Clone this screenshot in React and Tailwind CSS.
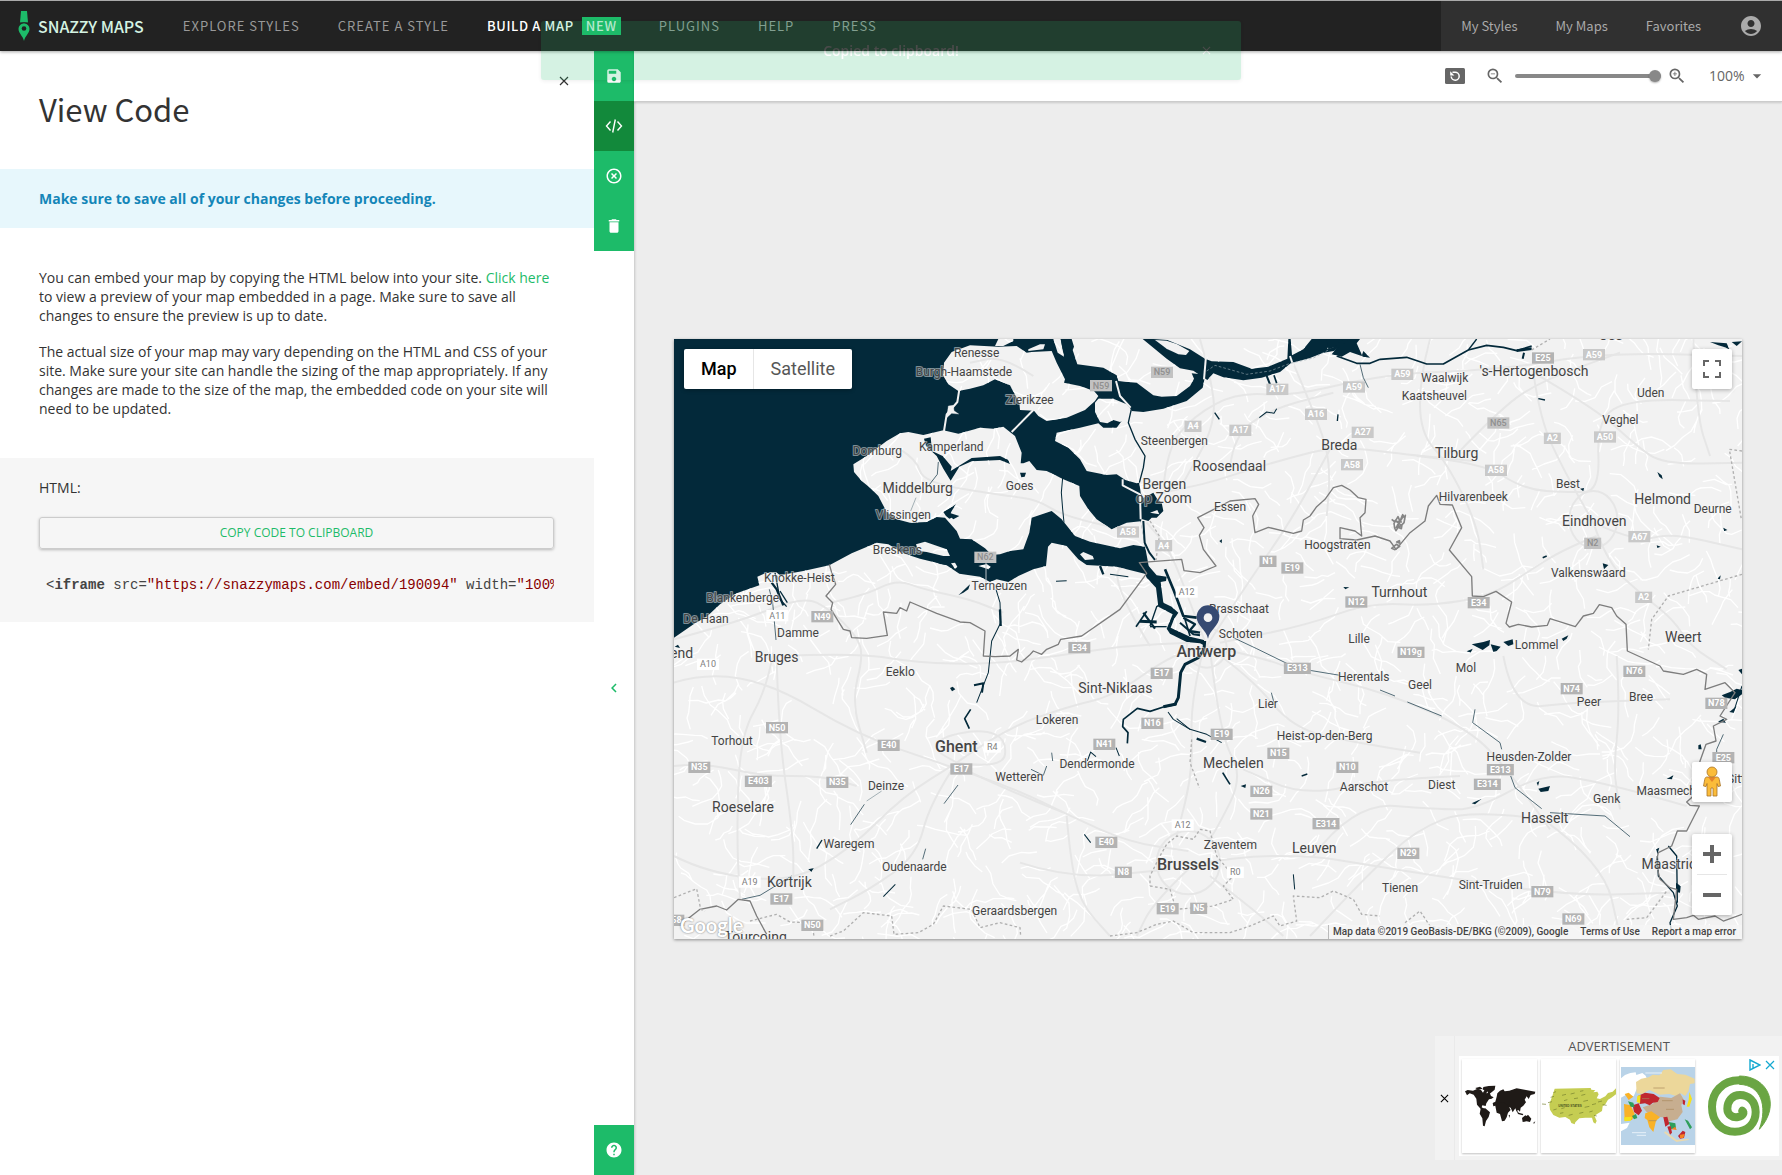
import React from "react";
import {
  MdSave,
  MdHighlightOff,
  MdDelete,
  MdHelp,
  MdAccountCircle,
  MdZoomIn,
  MdZoomOut,
  MdArrowDropDown,
  MdChevronLeft,
} from "react-icons/md";

/* ---------- map data (drawn at three units per pixel) ---------- */

const SEA = [
  // North Sea, Oosterschelde and Westerschelde
  "12,9 1150,9 1163,50 1182,62 1172,9 1205,9 1212,32 1208,42 1222,85 1300,95 1340,118 1345,135 1400,140 1450,178 1475,182 1520,180 1560,150 1572,128 1565,112 1606,116 1598,155 1550,195 1480,218 1420,228 1385,225 1355,255 1340,275 1300,275 1285,262 1230,275 1160,290 1155,315 1195,335 1230,370 1250,405 1310,417 1340,415 1366,432 1400,442 1408,440 1412,470 1425,500 1412,560 1425,630 1436,690 1430,715 1340,692 1250,687 1225,670 1190,630 1145,620 1134,632 1128,690 1090,700 1045,720 1015,738 980,730 960,738 930,722 868,713 830,688 750,668 700,652 655,625 620,620 545,652 478,688 400,705 330,718 318,708 285,712 262,722 268,748 200,772 150,805 110,842 75,862 12,905",
  // Haringvliet and Hollands Diep
  "1418,9 1450,9 1492,12 1560,40 1605,68 1625,76 1690,78 1745,98 1795,92 1852,68 1855,9 1862,9 1866,58 1900,40 1925,9 1990,9 1965,48 1920,66 1862,82 1830,108 1775,125 1720,133 1660,124 1630,112 1612,132 1590,118 1570,104 1530,97 1490,68 1450,35",
  "1970,9 2070,9 2060,22 2078,62 2100,65 2080,45 2075,60 2040,48 2015,62 1985,55 2005,30 1975,40",
  "1408,492 1450,470 1462,490 1475,500 1480,525 1460,545 1445,545 1435,555 1412,548",
  // river towards Antwerp
  "1408,676 1436,690 1460,718 1490,722 1488,735 1472,738 1480,800 1505,812 1525,830 1512,850 1502,875 1560,902 1602,912 1606,930 1590,922 1550,918 1500,893 1490,878 1508,835 1465,812 1458,755 1430,725",
];

const ISLANDS = [
  "820,120 822,80 845,48 900,28 985,32 1040,30 1070,50 1085,48 1145,45 1160,80 1185,130 1182,140 1230,150 1272,165 1285,180 1275,195 1245,222 1190,245 1130,255 1105,240 1092,224 1050,222 1048,200 1020,148 975,130 940,148 900,158 865,165 835,145",
  "550,385 590,360 650,315 690,292 715,288 760,297 820,283 865,293 930,275 970,278 1000,272 1035,300 1055,350 1052,382 1060,382 1078,375 1100,402 1130,405 1180,430 1228,450 1230,480 1255,520 1280,550 1325,580 1370,560 1412,556 1425,632 1390,627 1350,637 1260,617 1215,600 1175,550 1145,525 1085,545 1078,590 1060,640 1020,645 990,655 965,657 945,637 905,610 870,608 860,585 825,545 800,543 770,558 720,560 680,550 650,528 625,480 600,455 575,435 552,408",
  "1275,200 1285,188 1330,188 1370,205 1385,222 1382,245 1350,258 1330,252 1312,262 1290,258 1275,228",
  "1455,12 1490,38 1525,55 1548,57 1558,45 1520,24 1490,14",
  "738,625 765,617 830,640 840,660 820,660 770,648 745,645",
  "843,682 855,680 862,692 855,698",
  "1230,655 1240,648 1268,660 1272,670 1245,672",
  "985,9 975,30 1000,30 1030,15 1030,9",
  "925,690 950,684 962,692 955,700",
  "1075,40 1110,25 1125,25 1120,40 1075,45",
  "1440,530 1462,522 1468,535",
];

const INNER_WATER = [
  "762,308 782,304 786,345 818,360 845,392 842,405 905,366 990,360 1015,372 1020,384 990,372 940,374 905,376 868,392 842,434 820,398 800,360 768,330",
  "820,528 858,505 845,525 842,532 868,540 850,550 845,545 838,548 828,540",
  "750,655 800,662 850,690 810,684",
  "1050,410 1068,410 1064,422 1054,424",
  "865,778 900,745 895,760 880,770",
  "1172,9 1182,9 1190,42 1178,40",
  // lakes and ponds
  "2405,925 2440,918 2460,912 2458,928 2438,942 2425,935",
  "2500,918 2528,910 2530,925 2515,930",
  "2675,908 2695,898 2690,908 2680,915",
  "2798,682 2815,687 2802,700",
  "2962,408 2975,418 2978,430 2968,422",
  "2960,628 2972,632 2962,636",
  "3160,575 3172,582 3162,586",
  "3142,728 3152,718 3150,730",
  "2730,458 2742,456 2740,466",
  "3120,18 3170,22 3178,40 3160,32 3145,28",
  "3185,18 3216,16 3200,30",
  "2390,946 2408,938 2402,950",
  "2462,925 2492,932 2480,945 2470,948",
  "2605,1358 2640,1350 2635,1365 2612,1368",
  "2600,1340 2608,1335 2604,1350",
  "2405,1402 2435,1388 2415,1405",
  "2990,1328 3010,1318 3006,1330",
  "3155,1078 3180,1068 3200,1058 3216,1062 3216,1075 3195,1090 3165,1085",
  "3178,1128 3200,1110 3190,1130",
  "3142,1158 3160,1148 3168,1160",
  "3085,1228 3092,1225 3095,1240 3085,1240",
  "2958,1540 2968,1535 2962,1555",
  "3018,1640 3032,1650 3030,1670 3018,1668",
  "3205,1002 3216,998 3216,1015",
  "1712,1350 1728,1345 1726,1356",
  "2020,753 2038,754 2026,760",
  "1648,615 1656,610 1655,622",
  "14,932 24,926 30,936",
  "840,1056 848,1052 856,1060 846,1066",
  "415,1600 432,1596 424,1608",
];

// [points, width]
const STREAMS = [
  ["1385,215 1375,260 1395,310 1425,360 1420,395 1408,440", 4],
  ["1178,425 1174,470 1178,520 1182,560", 3],
  ["1420,555 1424,620 1438,650 1455,672", 6],
  ["1485,700 1512,765 1540,840 1580,845", 8],
  ["1540,845 1575,865 1558,885 1590,890", 7],
  ["1410,856 1460,858", 9],
  ["1420,830 1455,878", 7],
  ["1398,872 1430,826", 5],
  ["1440,870 1460,812 1480,800", 4],
  ["1440,872 1490,872", 4],
  ["1530,860 1570,895 1590,898", 6],
  ["1545,850 1560,900", 5],
  ["1604,915 1602,940 1585,965 1545,985 1532,1010 1525,1085 1515,1105 1480,1112", 9],
  ["1520,1105 1480,1113 1440,1126 1402,1117 1360,1150 1358,1172 1374,1190 1372,1222", 5],
  ["978,760 990,800 992,860 965,915 955,1010 920,1100", 3],
  ["990,820 992,870", 7],
  ["912,1048 940,1042 936,1070", 6],
  ["902,1120 884,1148 898,1178", 5],
  ["805,378 802,415 775,450", 2],
  ["738,485 722,525", 1],
  ["1290,690 1300,715", 7],
  ["1320,715 1375,722", 3],
  ["1158,736 1190,734", 3],
  ["2130,70 2210,64 2270,84 2320,84 2395,42 2450,28 2500,34 2540,44 2585,30", 5],
  ["2395,42 2420,9", 4],
  ["2540,44 2585,38", 8],
  ["2562,50 2558,68", 6],
  ["2000,60 2060,82 2100,82 2130,70", 5],
  ["2070,85 2080,125 2095,155", 2],
  ["1935,50 1990,40 2030,9", 10],
  ["1790,120 1800,145", 6],
  ["1812,118 1820,142", 5],
  ["1768,245 1790,228 1812,232 1820,218", 3],
  ["1634,230 1648,250", 4],
  ["2004,235 2002,255", 4],
  ["2605,188 2625,192", 4],
  ["2618,665 2630,660", 5],
  ["315,710 330,790 350,812", 4],
  ["298,760 308,800 318,912", 2],
  ["305,740 320,760 340,808", 7],
  ["330,765 352,800", 4],
  ["1494,1128 1510,1150 1560,1180", 3],
  ["1520,1148 1560,1180 1610,1195 1655,1220", 3],
  ["1580,1208 1608,1218", 7],
  ["1658,1310 1680,1345", 5],
  ["1690,905 1760,938 1850,982 1925,1004 2010,1018", 2],
  ["2130,1062 2175,1080", 2],
  ["2212,1098 2315,1140", 2],
  ["2415,1120 2408,1160 2490,1220 2495,1240", 2],
  ["2522,1320 2535,1355 2615,1418", 2],
  ["2640,1430 2805,1440 2880,1502", 2],
  ["583,1405 542,1466", 2],
  ["635,1365 590,1395", 1],
  ["864,1347 822,1403", 2],
  ["767,1538 758,1570", 2],
  ["456,1512 440,1538", 4],
  ["676,1645 640,1682", 3],
  ["365,1620 270,1678 215,1690", 2],
  ["1243,1495 1262,1520", 3],
  ["1252,1275 1262,1248 1278,1262", 3],
  ["1338,1235 1348,1260", 3],
  ["1804,1070 1812,1100", 2],
  ["1870,1615 1874,1660", 3],
  ["1895,1320 1912,1314", 4],
  ["1145,1250 1148,1275", 2],
  ["1083,1300 1120,1318 1130,1290", 2],
  ["2962,1560 2965,1620 3010,1670 3022,1710 3000,1760 3005,1790", 4],
  ["2995,1530 3020,1560 3022,1700", 4],
  ["3160,1195 3140,1240 3140,1260", 2],
  ["3216,1050 3190,1130", 3],
];

const BORDERS = [
  "478,685 485,710 497,745 468,780 488,800 483,820 520,880 540,885 545,905 590,907 652,898 640,828 680,832 690,815 710,825 720,798 800,832 870,858 900,860 945,885 940,960 975,962 1020,960 1045,940 1040,972 1055,978 1078,958 1090,945 1115,955 1130,940 1165,925 1172,910 1235,900 1350,820 1430,712 1408,680 1455,676 1535,670 1542,704 1590,710 1638,690 1600,640 1588,598 1602,575 1583,545 1680,495 1755,488 1766,505 1748,540 1755,590 1795,574 1870,592 1895,585 1900,552 1920,540 1940,512 1965,490 1990,455 2015,448 2040,462 2065,485 2088,490 2085,530 2070,545 2075,600 2055,585 2010,575 2010,608 2060,612 2115,600 2160,615 2178,640 2220,590 2265,555 2275,510 2300,478 2310,505 2347,507 2375,575 2338,642 2405,722 2407,780 2440,782 2478,766 2525,798 2508,862 2518,873 2545,865 2585,873 2632,868 2640,848 2716,872 2740,840 2770,832 2788,806 2825,815 2840,840 2868,865 2872,945 2970,990 2980,1005 3040,1015 3080,1000 3110,1015 3105,1060 3165,1040 3195,1070 3150,1140 3170,1150 3130,1170 3138,1215 3108,1225 3090,1275 3070,1380 3050,1398 3060,1408 3088,1410 3050,1485 3022,1485 3005,1530 2965,1550 2958,1580 2970,1630 3000,1655 3020,1660 3010,1750 3050,1745 3070,1738 3085,1750 3135,1740 3160,1755 3216,1735",
  "12,1765 45,1755 90,1720 140,1710 170,1722 205,1690 240,1695 260,1740 290,1795",
];

const DASHED = [
  "12,1685 80,1658 92,1720 105,1725",
  "240,1755 320,1735 360,1758 425,1760 432,1800",
  "480,1800 520,1785 580,1730 665,1740 672,1795 745,1790 790,1765 820,1710 905,1720 930,1775 990,1760 1050,1775 1052,1800",
  "1440,1650 1500,1660 1518,1720 1630,1710 1690,1690 1660,1650 1690,1620 1640,1560 1620,1485 1590,1480 1570,1510 1520,1500 1490,1525 1470,1560 1440,1620 1440,1650",
  "1320,1800 1400,1790 1460,1765 1510,1755 1570,1790 1680,1790 1740,1770 1810,1740 1830,1770 1880,1755 1870,1680 1950,1685 1990,1665 2050,1690 2075,1735 2130,1740",
  "1440,555 1468,600 1458,672",
  "2585,42 2640,9",
  "3216,715 2995,780 2945,850 2935,940",
  "3216,345 3178,340 3214,550",
  "2870,1750 2930,1745 2990,1665",
  "2205,1760 2250,1725 2280,1770 2350,1785",
  "1565,1210 1560,1280 1588,1355",
];

const MAJOR_ROADS = [
  "12,1040 110,1010 310,1045 560,1195 820,1285 1040,1360 1200,1440 1380,1520 1555,1545",
  "310,950 290,1060 210,1200 200,1500 210,1690",
  "320,960 325,1190 370,1500 370,1640",
  "12,1560 110,1610 360,1640 540,1540 700,1380 860,1280",
  "860,1280 1000,1180 1200,1110 1330,1080 1500,960 1610,930",
  "860,1280 780,1400 740,1560 600,1660 480,1720",
  "860,1290 1010,1360 1180,1430",
  "480,800 580,780 680,730 760,760 900,790 1000,830",
  "330,960 560,950 740,980 960,985 1160,960 1360,930 1560,920",
  "12,910 200,860 400,780 480,820 560,900 580,960 545,1095 590,1250",
  "1480,470 1600,445 1680,420 1840,370 2000,330 2250,360 2410,375",
  "1590,10 1620,110 1640,260 1540,440",
  "1865,70 1920,200 1970,330 1980,430 1970,540",
  "1680,395 1690,300 1800,220 1990,170",
  "1480,460 1490,340 1570,240 1700,170 1860,180 2080,130 2230,110 2500,100 2800,50 3216,60",
  "2360,355 2480,230 2600,140 2850,50",
  "2590,110 2610,250 2680,400 2770,560",
  "2590,110 2780,220 2900,330 2980,385 3216,380",
  "2240,360 2440,380 2560,460 2700,470 2790,465 2780,250 2880,190 3180,195",
  "2770,560 2900,620 3000,590 3216,640",
  "2770,560 2810,680 2920,780 3010,850 3060,930 3170,1000",
  "2780,600 2680,640 2570,710 2460,780 2280,810 2100,800 1900,870 1650,920",
  "1610,930 1560,800 1500,640 1430,560",
  "1610,930 1740,730 1860,560 1980,340",
  "1610,930 1760,960 1900,1010 2150,1070 2400,1180 2520,1310 2640,1480",
  "1600,940 1560,1100 1570,1300 1520,1500",
  "1620,940 1650,1200 1720,1320 1640,1480 1610,1520",
  "1555,1590 1700,1560 1930,1560 2050,1580 2300,1620 2700,1680 3000,1670",
  "1930,1560 2050,1400 2300,1420 2420,1420 2620,1310 2800,1340 3050,1410",
  "2620,1450 2800,1580 2850,1800",
  "2620,1450 2400,1420 2240,1480 2100,1610 1920,1800",
  "1555,1600 1450,1700 1400,1800",
  "1620,1620 1750,1720 1840,1800",
  "1190,1440 1200,1560 1230,1700 1320,1800",
  "860,1280 1000,1300 1010,1210 940,1180 820,1200 790,1240 860,1280",
  "1440,930 1300,700 1420,690",
  "1610,930 1740,1020 1870,1180 2060,1220 2250,1250",
  "2280,10 2250,120 2250,290 2330,380 2420,560 2440,700",
  "2840,960 2850,1120 2830,1300 2850,1420",
  "2500,960 2530,1120 2700,1100 3000,1090",
  "12,1290 100,1280 270,1320 460,1320 560,1350",
  "1050,1580 1200,1630 1500,1600",
  "2370,1320 2130,1330 1900,1380 1720,1300",
  "3070,10 3080,240 3120,360",
  "690,340 740,370 760,440 1010,480 1100,490 1180,540 1400,590",
  "1090,120 1000,60 900,80",
];

// [text, x, y, size]: size m = town, l = large town, c = city
const PLACES = [
  ["Renesse", 920, 51, "m"], ["Burgh-Haamstede", 882, 108, "m"], ["Zierikzee", 1079, 192, "m"],
  ["Domburg", 622, 346, "m"], ["Kamperland", 844, 333, "m"], ["Middelburg", 743, 460, "l"],
  ["Goes", 1049, 451, "m"], ["Vlissingen", 700, 538, "m"], ["Breskens", 682, 643, "m"],
  ["Terneuzen", 988, 751, "m"], ["Knokke-Heist", 388, 727, "m"], ["Blankenberge", 218, 787, "m"],
  ["De Haan", 108, 850, "m"], ["Damme", 384, 892, "m"], ["Steenbergen", 1513, 316, "m"],
  ["Roosendaal", 1678, 394, "l"], ["Breda", 2008, 331, "l"], ["Bergen", 1483, 448, "l"],
  ["op Zoom", 1482, 488, "l"], ["Essen", 1680, 514, "m"], ["Hoogstraten", 2002, 628, "m"],
  ["Brasschaat", 1707, 820, "m"], ["Schoten", 1712, 895, "m"], ["Lille", 2067, 910, "m"],
  ["Waalwijk", 2324, 127, "m"], ["'s-Hertogenbosch", 2592, 109, "l"], ["Kaatsheuvel", 2293, 181, "m"],
  ["Uden", 2942, 172, "m"], ["Veghel", 2851, 253, "m"], ["Tilburg", 2360, 353, "l"],
  ["Best", 2694, 445, "m"], ["Hilvarenbeek", 2410, 484, "m"], ["Helmond", 2978, 493, "l"],
  ["Deurne", 3128, 520, "m"], ["Eindhoven", 2773, 559, "l"], ["Valkenswaard", 2755, 712, "m"],
  ["Turnhout", 2188, 770, "l"], ["Weert", 3040, 907, "l"], ["Lommel", 2600, 928, "m"],
  ["end", 35, 955, "l"], ["Bruges", 320, 967, "l"], ["Eeklo", 691, 1009, "m"],
  ["Torhout", 186, 1216, "m"], ["Ghent", 859, 1237, "c"], ["Wetteren", 1048, 1324, "m"],
  ["Deinze", 648, 1351, "m"], ["Roeselare", 219, 1417, "l"], ["Waregem", 537, 1525, "m"],
  ["Oudenaarde", 733, 1594, "m"], ["Kortrijk", 358, 1642, "l"], ["Geraardsbergen", 1034, 1726, "m"],
  ["Tourcoing", 257, 1806, "l"], ["Antwerp", 1609, 950, "c"], ["Sint-Niklaas", 1336, 1060, "l"],
  ["Lokeren", 1161, 1153, "m"], ["Lier", 1794, 1105, "m"], ["Herentals", 2081, 1024, "m"],
  ["Heist-op-den-Berg", 1964, 1201, "m"], ["Dendermonde", 1281, 1285, "m"], ["Mechelen", 1690, 1285, "l"],
  ["Aarschot", 2082, 1354, "m"], ["Zaventem", 1681, 1528, "m"], ["Leuven", 1933, 1540, "l"],
  ["Brussels", 1554, 1591, "c"], ["Mol", 2388, 997, "m"], ["Geel", 2250, 1048, "m"],
  ["Peer", 2757, 1099, "m"], ["Bree", 2913, 1084, "m"], ["Heusden-Zolder", 2577, 1264, "m"],
  ["Diest", 2315, 1348, "m"], ["Genk", 2810, 1390, "m"], ["Hasselt", 2624, 1450, "l"],
  ["Maasmechelen", 3022, 1366, "m"], ["Maastricht", 3015, 1588, "l"], ["Tienen", 2190, 1657, "m"],
  ["Sint-Truiden", 2462, 1648, "m"], ["Sittard", 3224, 1330, "m"], ["Oss", 2822, -1, "l"],
];

// [text, x, y, kind]: d = dark, g = grey, n = muted, w = white
const SHIELDS = [
  ["N62", 946, 664, "n"], ["A11", 322, 839, "w"], ["N49", 457, 842, "d"], ["N59", 1476, 109, "n"],
  ["N59", 1293, 149, "n"], ["A17", 1822, 160, "g"], ["A59", 2052, 153, "g"], ["A4", 1569, 271, "g"],
  ["A17", 1711, 283, "g"], ["A16", 1938, 235, "g"], ["A27", 2078, 289, "g"], ["A58", 2046, 386, "g"],
  ["A58", 1374, 588, "g"], ["A4", 1481, 629, "g"], ["N1", 1794, 676, "d"], ["E19", 1867, 696, "d"],
  ["A12", 1550, 768, "w"], ["N12", 2059, 798, "d"], ["E34", 1228, 935, "d"], ["A59", 2197, 115, "g"],
  ["E25", 2619, 66, "d"], ["A59", 2772, 56, "g"], ["N65", 2485, 261, "n"], ["A2", 2647, 307, "g"],
  ["A50", 2805, 303, "g"], ["A58", 2478, 403, "g"], ["N2", 2768, 622, "n"], ["A67", 2908, 602, "g"],
  ["A2", 2921, 784, "g"], ["E34", 2426, 800, "d"], ["A10", 114, 985, "w"], ["N50", 321, 1175, "d"],
  ["E40", 656, 1228, "d"], ["R4", 967, 1233, "w"], ["N35", 88, 1294, "d"], ["E403", 265, 1336, "d"],
  ["N35", 502, 1339, "d"], ["E17", 874, 1299, "d"], ["A19", 239, 1638, "w"], ["E17", 334, 1689, "d"],
  ["N50", 427, 1768, "d"], ["N58", 10, 1753, "d"], ["E17", 1475, 1012, "d"], ["E313", 1882, 997, "d"],
  ["N16", 1447, 1162, "d"], ["E19", 1655, 1195, "d"], ["N41", 1303, 1225, "d"], ["N15", 1825, 1252, "d"],
  ["N10", 2032, 1294, "d"], ["N26", 1774, 1366, "d"], ["N21", 1774, 1434, "d"], ["E314", 1968, 1463, "d"],
  ["A12", 1538, 1467, "w"], ["E40", 1309, 1519, "d"], ["N8", 1360, 1609, "d"], ["R0", 1696, 1609, "w"],
  ["E19", 1493, 1718, "d"], ["N5", 1586, 1717, "d"], ["N19g", 2223, 949, "d"], ["N76", 2893, 1006, "d"],
  ["N74", 2705, 1058, "d"], ["N78", 3139, 1102, "d"], ["E25", 3160, 1265, "d"], ["E313", 2491, 1301, "d"],
  ["E314", 2452, 1345, "d"], ["N29", 2215, 1552, "d"], ["N79", 2617, 1667, "d"], ["N69", 2710, 1749, "d"],
];

const SHIELD_STYLE = {
  d: { box: "#b3b3b3", ink: "#ffffff", weight: 700 },
  g: { box: "#c9c9c9", ink: "#ffffff", weight: 700 },
  n: { box: "#c2c2c2", ink: "#8f8f8f", weight: 500 },
  w: { box: "#ffffff", ink: "#808080", weight: 400 },
};

const PLACE_STYLE = {
  m: { size: 36, weight: 400 },
  l: { size: 42, weight: 400 },
  c: { size: 48, weight: 500 },
};

function seeded(seed) {
  let s = seed;
  return () => {
    s = (s * 1664525 + 1013904223) % 4294967296;
    return s / 4294967296;
  };
}

/* Short wandering local roads spread evenly over the land. */
function localRoads() {
  const rnd = seeded(29);
  const out = [];
  for (let gx = 0; gx < 3240; gx += 72) {
    for (let gy = 0; gy < 1820; gy += 72) {
      let x = gx + rnd() * 72;
      let y = gy + rnd() * 72;
      let angle = rnd() * Math.PI * 2;
      const steps = 3 + Math.floor(rnd() * 4);
      let d = `M${x.toFixed(0)} ${y.toFixed(0)}`;
      for (let i = 0; i < steps; i++) {
        angle += (rnd() - 0.5) * 1.4;
        const len = 14 + rnd() * 26;
        x += Math.cos(angle) * len;
        y += Math.sin(angle) * len;
        d += `L${x.toFixed(0)} ${y.toFixed(0)}`;
      }
      out.push(d);
    }
  }
  return out.join("");
}

/* Rounds a list of points into a smooth curve. */
function smooth(points) {
  const p = points.split(" ").map((s) => s.split(",").map(Number));
  let d = `M${p[0][0]} ${p[0][1]}`;
  for (let i = 1; i < p.length - 1; i++) {
    const mx = (p[i][0] + p[i + 1][0]) / 2;
    const my = (p[i][1] + p[i + 1][1]) / 2;
    d += `Q${p[i][0]} ${p[i][1]} ${mx} ${my}`;
  }
  const last = p[p.length - 1];
  return `${d}L${last[0]} ${last[1]}`;
}

const LOCAL = localRoads();

function Terrain({ sea, land }) {
  return (
    <>
      {SEA.map((p) => <polygon key={p} points={p} fill={sea} />)}
      {ISLANDS.map((p) => <polygon key={p} points={p} fill={land} />)}
      {INNER_WATER.map((p) => <polygon key={p} points={p} fill={sea} />)}
    </>
  );
}

function MapDrawing() {
  return (
    <svg viewBox="12 9 3204 1800" preserveAspectRatio="xMidYMid slice" className="block h-full w-full bg-[#f2f2f2]" fontFamily="Roboto, sans-serif" role="img" aria-label="Map of Antwerp and surroundings">
      <mask id="land" maskUnits="userSpaceOnUse" x="0" y="0" width="3300" height="1900">
        <rect width="3300" height="1900" fill="white" />
        <Terrain sea="black" land="white" />
      </mask>
      <Terrain sea="#03293a" land="#f2f2f2" />
      <g mask="url(#land)" fill="none" strokeLinejoin="round">
        <path d={LOCAL} stroke="#ffffff" strokeWidth="4" />
        {MAJOR_ROADS.map((p) => <path key={p} d={smooth(p)} stroke="#e6e6e6" strokeWidth="6" />)}
        <circle cx="1555" cy="1580" r="95" stroke="#e6e6e6" strokeWidth="6" />
        <circle cx="1610" cy="935" r="60" stroke="#e6e6e6" strokeWidth="6" />
        <ellipse cx="2770" cy="550" rx="72" ry="85" stroke="#e6e6e6" strokeWidth="6" />
      </g>
      <g fill="none" stroke="#03293a" strokeLinejoin="round">
        {STREAMS.map(([p, w]) => <polyline key={p} points={p} strokeWidth={w} />)}
      </g>
      <g fill="none" stroke="#f2f2f2" strokeWidth="6" strokeLinejoin="round">
        <polyline points="868,160 862,198 830,235 822,285" />
        <polygon points="835,210 850,208 852,224 866,234 845,232 830,245" fill="#f2f2f2" strokeWidth="1" />
        <polyline points="1090,222 1025,288" />
        <polyline points="1338,135 1350,180 1382,215" />
        <polyline points="1358,430 1358,448 1410,475 1412,550" />
        <polyline points="1608,60 1602,130" />
        <polyline points="1860,60 1870,90" />
        <polyline points="948,650 948,740" stroke="#b9c0c4" strokeWidth="3" />
      </g>
      <polyline points="1610,105 1635,88 1730,115 1800,105 1860,82 1930,66 1975,42" fill="none" stroke="#8fa0a8" strokeWidth="2" strokeDasharray="8 6" />
      <g fill="none" strokeLinejoin="round">
        {BORDERS.map((p) => <polyline key={p} points={p} stroke="#7d7d7d" strokeWidth="4" />)}
        {DASHED.map((p) => <polyline key={p} points={p} stroke="#b0b0b0" strokeWidth="4" strokeDasharray="8 7" />)}
        <path d="M2172 562l12-20 6 14 8-20 6 10 2-8-4 22-6 6-2 12-10-4-6 10-4-8zM2174 552l20 16M2178 576l22-36M2182 556l14 2M2180 566l12 6M2165 550l10 8M2165 637l14-12 10 6-14 10zM2180 618l8-4 2 8z" stroke="#858585" strokeWidth="5" />
      </g>
      {SHIELDS.map(([t, x, y, kind]) => {
        const s = SHIELD_STYLE[kind];
        const w = t.length * 15 + 21;
        return (
          <g key={`${t}-${x}`}>
            <rect x={x - w / 2} y={y - 17} width={w} height="34" fill={s.box} />
            <text x={x} y={y + 9} textAnchor="middle" fontSize="27" fontWeight={s.weight} fill={s.ink}>{t}</text>
          </g>
        );
      })}
      {PLACES.map(([t, x, y, kind]) => {
        const s = PLACE_STYLE[kind];
        return (
          <text key={t} x={x} y={y + 12} textAnchor="middle" fontSize={s.size} fontWeight={s.weight} fill="#444444" stroke="#f5f5f5" strokeOpacity="0.5" strokeWidth="6" strokeLinejoin="round" paintOrder="stroke">{t}</text>
        );
      })}
      <path d="M1614 908c-5-28-34-38-34-66a34 34 0 0 1 68 0c0 28-29 38-34 66z" fill="#364a72" />
      <circle cx="1614" cy="845" r="13" fill="#f2f2f2" />
    </svg>
  );
}

/* ---------- icons ---------- */

function CodeIcon() {
  return (
    <svg viewBox="0 0 18 16" className="h-4 w-[18px]" fill="none" stroke="white" strokeWidth="1.4">
      <path d="M5.500 3.500 1.500 8l4 4.500M12.500 3.500 16.500 8l-4 4.500M10.300 1.500 7.700 14.500" />
    </svg>
  );
}

function CloseIcon({ className }) {
  return (
    <svg viewBox="0 0 10 10" className={className} fill="none" stroke="currentColor" strokeWidth="1.200">
      <path d="M1 1l8 8M9 1L1 9" />
    </svg>
  );
}

function LogoMark() {
  return (
    <svg viewBox="0 0 12 30" className="h-[30px] w-3">
      <path d="M3 0h6l1 11.500H2z" fill="#1dbb69" />
      <path d="M6 30C5 25 .5 22.500.500 17.800a5.500 5.500 0 0 1 11 0C11.500 22.500 7 25 6 30z" fill="#1dbb69" />
      <path d="M2 12.300q4-1.600 8 0" stroke="#222" strokeWidth=".8" fill="none" />
      <circle cx="6" cy="17.500" r="2.300" fill="#222" />
    </svg>
  );
}

function ResetIcon() {
  return (
    <svg viewBox="0 0 20 16" className="h-4 w-5">
      <rect width="20" height="16" rx="1.500" fill="#666" />
      <path d="M6.200 8.500A4 4 0 1 0 10 4.200H7.500" fill="none" stroke="white" strokeWidth="1.500" />
      <path d="M5.200 3.200v4.300h4.200z" fill="white" />
    </svg>
  );
}

function Pegman() {
  return (
    <svg viewBox="0 0 18 31" className="h-[31px] w-[18px]" stroke="#a8742a" strokeWidth=".8">
      <path d="M4 11h10c1.500 0 2 1 2.300 2.500L17.500 20l-2.500.500-1-3V30H10v-8H8v8H4V17.500l-1 3L.500 20l1.200-6.500C2 12 2.500 11 4 11z" fill="#fbbc3a" />
      <path d="M5 11h8l-4 5z" fill="#e5842c" stroke="none" />
      <circle cx="9" cy="6" r="5" fill="#fbbc3a" />
    </svg>
  );
}

/* ---------- header ---------- */

const navLink = "font-['Noto_Sans_CJK_SC',sans-serif] text-[13px] leading-5 tracking-[1px] whitespace-nowrap";

function Header() {
  return (
    <header className="relative z-10 flex h-[51px] shrink-0 items-stretch border-t border-[#aaa] bg-[#222] shadow-[0_1px_3px_rgba(0,0,0,0.35)]">
      <a href="#home" className="flex items-center gap-2 pl-[18px]">
        <LogoMark />
        <span className="font-['Noto_Sans_CJK_SC',sans-serif] text-base font-medium whitespace-nowrap text-[#d5f3e2]">SNAZZY MAPS</span>
      </a>
      <nav className="flex flex-1 items-center gap-[38px] pl-[39px] text-[#999]">
        <a href="#explore" className={navLink}>EXPLORE STYLES</a>
        <a href="#create" className={navLink}>CREATE A STYLE</a>
        <a href="#build" className="flex items-center gap-2 text-white">
          <span className="font-['Noto_Sans_CJK_SC',sans-serif] text-[13px] leading-5 font-medium tracking-wider whitespace-nowrap">BUILD A MAP</span>
          <span className="bg-[#1dbb69] px-1 font-['Noto_Sans_CJK_SC',sans-serif] text-[13px] leading-[18px] font-medium tracking-wider text-[#d5f3e2]">NEW</span>
        </a>
        <a href="#plugins" className={navLink}>PLUGINS</a>
        <a href="#help" className={navLink}>HELP</a>
        <a href="#press" className={navLink}>PRESS</a>
      </nav>
      <div className="flex items-center gap-[38px] bg-[#303030] pr-[19px] pl-5 font-['Noto_Sans_CJK_SC',sans-serif] text-[13px] leading-5 text-[#aaa]">
        <a href="#my-styles">My Styles</a>
        <a href="#my-maps">My Maps</a>
        <a href="#favorites">Favorites</a>
        <button type="button" aria-label="Account"><MdAccountCircle className="size-6" /></button>
      </div>
    </header>
  );
}

/* ---------- left panel ---------- */

function CodePanel() {
  return (
    <section className="relative w-1/3 shrink-0 bg-white text-sm leading-[19px] text-[#333]">
      <button type="button" aria-label="Close panel" className="absolute top-[25px] right-[25px]"><CloseIcon className="size-[10px]" /></button>
      <h1 className="px-[39px] pt-[34px] pb-9 font-['Noto_Sans_CJK_SC',sans-serif] text-[31px] leading-[48px]">View Code</h1>
      <p className="bg-[#e7f7fc] px-[39px] py-5 font-bold text-[#1486b8]">Make sure to save all of your changes before proceeding.</p>
      <div className="flex flex-col gap-[17px] px-[39px] py-10">
        <p>
          You can embed your map by copying the HTML below into your site.{" "}
          <a href="#preview" className="text-[#1dbb69]">Click here</a> to view a preview of your map embedded in a page. Make sure to save all changes to ensure the preview is up to date.
        </p>
        <p>The actual size of your map may vary depending on the HTML and CSS of your site. Make sure your site can handle the sizing of the map appropriately. If any changes are made to the size of the map, the embedded code on your site will need to be updated.</p>
      </div>
      <div className="bg-[#f6f6f6] pt-5 pr-10 pb-5 pl-[39px]">
        <p>HTML:</p>
        <button type="button" className="mt-5 block h-8 w-full rounded-[3px] border border-[#ccc] text-xs text-[#1dbb69] shadow-[0_1px_3px_rgba(0,0,0,0.25)]">COPY CODE TO CLIPBOARD</button>
        <pre className="mt-[18px] overflow-hidden p-[7px] pt-2 font-['Liberation_Mono',monospace] text-sm leading-5 text-[#444]">
          &lt;<b>iframe</b> src=<span className="text-[#880000]">"https://snazzymaps.com/embed/190094"</span> width=<span className="text-[#880000]">"100%</span>
        </pre>
      </div>
    </section>
  );
}

const tool = "flex h-[50px] w-full items-center justify-center bg-[#1dbb69] text-white";

function ToolRail() {
  return (
    <aside className="flex w-10 shrink-0 flex-col items-center bg-white shadow-[0_0_3px_rgba(0,0,0,0.3)]">
      <button type="button" aria-label="Save" className={tool}><MdSave className="size-[18px]" /></button>
      <button type="button" aria-label="View code" className="flex h-[50px] w-full items-center justify-center bg-[#12893b]"><CodeIcon /></button>
      <button type="button" aria-label="Discard" className={tool}><MdHighlightOff className="size-[18px]" /></button>
      <button type="button" aria-label="Delete" className={tool}><MdDelete className="size-[18px]" /></button>
      <button type="button" aria-label="Collapse panel" className="flex w-full flex-1 items-center justify-center text-[#1dbb69]"><MdChevronLeft className="size-[18px]" /></button>
      <button type="button" aria-label="Help" className={tool}><MdHelp className="size-[18px]" /></button>
    </aside>
  );
}

/* ---------- workspace ---------- */

function ZoomBar() {
  return (
    <div className="relative flex h-[51px] shrink-0 items-center justify-end border-b border-[#ccc] bg-white pr-[19px] text-[#666] shadow-[0_1px_2px_rgba(0,0,0,0.15)]">
      <button type="button" aria-label="Reset view"><ResetIcon /></button>
      <button type="button" aria-label="Zoom out" className="ml-5"><MdZoomOut className="size-5" /></button>
      <input
        type="range"
        aria-label="Zoom"
        defaultValue="100"
        className="mx-[10px] h-1 w-[146px] appearance-none rounded bg-[#888] [&::-webkit-slider-thumb]:size-3 [&::-webkit-slider-thumb]:appearance-none [&::-webkit-slider-thumb]:rounded-full [&::-webkit-slider-thumb]:bg-[#888] [&::-webkit-slider-thumb]:shadow-[0_1px_2px_rgba(0,0,0,0.3)]"
      />
      <button type="button" aria-label="Zoom in" className="-ml-1"><MdZoomIn className="size-5" /></button>
      <div className="relative ml-[22px] flex items-center">
        <select aria-label="Zoom level" defaultValue="100%" className="w-[54px] appearance-none bg-transparent text-sm leading-5 outline-none">
          <option>100%</option>
          <option>75%</option>
          <option>50%</option>
        </select>
        <MdArrowDropDown className="pointer-events-none absolute -right-1 size-5" />
      </div>
    </div>
  );
}

const control = "absolute right-[10px] flex w-10 items-center justify-center rounded-[2px] bg-white shadow-[0_1px_4px_rgba(0,0,0,0.3)]";

function MapFrame() {
  return (
    <div className="relative h-[600px] w-full overflow-hidden font-['Roboto',sans-serif] shadow-[0_1px_3px_rgba(0,0,0,0.4)]">
      <MapDrawing />
      <div className="absolute top-[10px] left-[10px] flex h-10 items-center rounded-[2px] bg-white text-lg leading-10 shadow-[0_1px_4px_rgba(0,0,0,0.3)]">
        <button type="button" className="pr-4 pl-[17px] font-medium text-black">Map</button>
        <button type="button" className="border-l border-[#e6e6e6] px-[17px] text-[#565656]">Satellite</button>
      </div>
      <button type="button" aria-label="Full screen" className={`${control} top-[10px] h-10`}>
        <svg viewBox="0 0 18 18" className="size-[18px]" fill="none" stroke="#666" strokeWidth="2">
          <path d="M1 6V1h5M12 1h5v5M17 12v5h-5M6 17H1v-5" />
        </svg>
      </button>
      <button type="button" aria-label="Street view" className={`${control} bottom-[137px] h-10`}><Pegman /></button>
      <div className={`${control} bottom-6 h-[81px] flex-col`}>
        <button type="button" aria-label="Zoom map in" className="flex w-full flex-1 items-center justify-center">
          <svg viewBox="0 0 18 18" className="size-[18px]"><path d="M7 0h4v7h7v4h-7v7H7v-7H0V7h7z" fill="#666" /></svg>
        </button>
        <span className="h-px w-[30px] bg-[#e6e6e6]" />
        <button type="button" aria-label="Zoom map out" className="flex w-full flex-1 items-center justify-center">
          <svg viewBox="0 0 18 18" className="size-[18px]"><path d="M0 7h18v4H0z" fill="#666" /></svg>
        </button>
      </div>
      <span className="absolute bottom-0 left-[6px] font-['Lato',sans-serif] text-xl leading-7 font-bold text-white [text-shadow:0_0_2px_rgba(0,0,0,0.55)]">Google</span>
      <div className="absolute right-0 bottom-0 flex gap-3 border-l border-[#bbb] bg-[#f5f5f5]/80 pr-[6px] pl-1 text-[10px] leading-[14px] font-medium text-[#444]">
        <span>Map data ©2019 GeoBasis-DE/BKG (©2009), Google</span>
        <a href="#terms">Terms of Use</a>
        <a href="#report">Report a map error</a>
      </div>
    </div>
  );
}

/* ---------- advertisement ---------- */

const card = "h-[94px] w-[75px] bg-white shadow-[0_1px_2px_rgba(0,0,0,0.25)]";

function WorldMap() {
  return (
    <svg viewBox="126 87 225 282" className={card} fill="#1f1a17">
      <path d="M135 184l8-4 16 2 12-5 12 3 6 8 6-12 8 6-4 8 10-2 4 10 8 4-6 4-8 2-8 12-2 8-10-2-2 6 10 6 6 6-6 2-12-8-12-14-2-18-8-12-12-4-8 6z" />
      <path d="M166 174l14-4 8 6-14 4z" />
      <path d="M190 171l16-3 20-1-2 12-12 10-6 4-6-12-12-2zM182 236l14-1 14 12-4 14-8 12-4 16-5-2-2-22-8-14z" />
      <path d="M230 200l2-10 8-8 10-4 4 6 14-2 22-7 24 4 32 6-2 7-12 3-6 12-6-8-6 10 4 8-8 10-8 6-2 12-6-6-4 6-4-10-8 12-6-14-8-2-6 4-10-6-6 2-4-4-6 4-6-4-6 2-2-10 8-4z" />
      <path d="M226 228l10-12 16 2 12 8 8 14-8 8-4 14-6 10-8 2-6-22-10-4zM288 238l8 10 14 4-2 4-14-4zM306 264l10-8 4 2 4-4 10 12-4 10-10-2-12 2zM340 278l6-4-4 8zM266 256l4-2-2 10z" />
    </svg>
  );
}

function UsaMap() {
  return (
    <svg viewBox="363 87 225 282" className={card}>
      <path d="M404 176l108-2 2 5 12 2-6 6 12-2 4 8-6 12 10 2 16-8 8-10 14-4 10-10v18l-14 10-10 6-8 14-8 6-2 14-16 10-6 6 6 14-4 8-6-4-4-14-20 0-18 2-12 12-2 6-10-4-4-10-14-8-18 2-18-8-10-16-2-16 8-22z" fill="#c5cd52" />
      <path d="M366 222l12 1M400 188l8-3M392 202l10-3M384 218l12-3M400 240l10-3M426 196l12-3M432 212l10-3M452 192l12-3M462 206l12-2M484 196l12-3M490 214l14-3M420 250l10-2M446 256l12-3M478 250l12-3M508 246l10-3M516 224l12-3M534 216l12-3M424 236l10-3M494 232l14-3M548 224l12 2M522 256l8 2M480 184l10-2" stroke="#747e2e" strokeWidth="2" fill="none" />
      <text x="450" y="231" textAnchor="middle" fontSize="9" fontWeight="700" fontFamily="Liberation Sans, sans-serif" fill="#4c5420">UNITED STATES</text>
    </svg>
  );
}

function AsiaMap() {
  return (
    <svg viewBox="600 87 225 282" className={card}>
      <rect x="603" y="111" width="222" height="234" fill="#b9d3e8" />
      <path d="M603 145l12-10 16-6 16-2 2 8 18-6 10 8 4 10-18 16-12 12-10 24-20-6-18 10z" fill="#fff" />
      <path d="M603 282l26-4-8 16-18 10z" fill="#fff" />
      <path d="M650 190l-2-34 16-10 22-4 12-8 20 2 12-16 22-2 20 14 24 2 28 12v14l-14 2-4 20-10 16-14-8-14 8-20-6-30 2-30-14-22 12z" fill="#ecd79a" />
      <path d="M668 232l30-10 22-22 34 4 26-14 10 16-6 20 4 20-16 22-24 6-20-12-26-2-22-14z" fill="#c7ae90" />
      <path d="M655 197l20-9 26 4 18 12-6 12-14 2-10 8-14-6-16 2zM638 226l18-6 10 22-10 14-14-10zM730 262l12-2 6 22-12 8z" fill="#c0262f" />
      <path d="M614 192l12-4 14 12-14 10zM612 222l20 4 12 26-8 18-22 2z" fill="#f9b227" />
      <path d="M612 262l24-2-4 12-18 2z" fill="#f6e21c" />
      <path d="M676 250l18-6 26 18-12 10-8 34-12-14-6-22-8-6z" fill="#f9b227" />
      <path d="M652 198l10-4-2 26-10-4zM808 186l8 20-8 24-8 0 6-20z" fill="#f6e21c" />
      <path d="M624 214l16 4 4 14-12-2zM636 258l12-6 4 12-10 4zM746 276l20 4 2 14-14 4zM794 268l10 4 12 20-6 6z" fill="#2f9e5a" />
      <path d="M742 290l10-2 4 20-6 6zM774 318l14-16 8 4-4 18-12 2zM788 208l8 4-2 14-6-4z" fill="#c0262f" />
      <path d="M736 304l34 26-4 4-34-26zM766 330l40-4v4l-38 6z" fill="#ead9ae" />
      <path d="M754 298l12-8 4 10zM780 314l14-2-4 12h-10z" fill="#f58220" />
      <path d="M676 129h50M636 308h42M650 316h28" stroke="#e6f0f8" strokeWidth="3" />
      <path d="M700 174h34M726 212h32M738 238h24M686 272h24M666 206h22" stroke="#a98a5c" strokeWidth="2" />
    </svg>
  );
}

function SpiralLogo() {
  return (
    <svg viewBox="837 87 231 282" className="h-[94px] w-[77px]">
      <path d="M1018 298C1084 226 1044 138 958 138v25C1022 165 1044 226 1018 298z" fill="#6aa543" stroke="#6aa543" strokeWidth="3" strokeLinejoin="round" />
      <path d="M960 151C905 150 876 190 876 230C876 276 905 305 945 305C984 305 1007 280 1007 246C1007 213 985 195 960 195C936 195 922 214 922 236C922 254 938 264 954 261C970 258 974 246 967 242" fill="none" stroke="#6aa543" strokeWidth="24" strokeLinecap="round" />
    </svg>
  );
}

function AdBanner() {
  return (
    <aside className="absolute right-0 bottom-[15px] flex bg-[#f2f2f2]">
      <button type="button" aria-label="Close advertisement" className="flex w-5 items-center justify-center border-r border-[#eaeaea]"><CloseIcon className="size-[9px]" /></button>
      <div className="pr-[3px] pb-1 pl-1 text-center">
        <p className="text-[13px] leading-5 text-[#555]">ADVERTISEMENT</p>
        <div className="relative flex items-center gap-1 bg-white p-[3px]">
          <WorldMap />
          <UsaMap />
          <AsiaMap />
          <SpiralLogo />
          <a href="#adchoices" aria-label="Ad choices" className="absolute top-[3px] right-[18px]">
            <svg viewBox="0 0 12 12" className="size-3" fill="none" stroke="#14a9d0" strokeWidth="1.400"><path d="M1 1l10 5-10 5zM4 5v4" /></svg>
          </a>
          <button type="button" aria-label="Hide ad" className="absolute top-1 right-1 text-[#14a9d0]"><CloseIcon className="size-[10px]" /></button>
        </div>
      </div>
    </aside>
  );
}

export default function App() {
  return (
    <div className="relative flex h-screen flex-col overflow-hidden bg-[#ededed] font-['Open_Sans',sans-serif]">
      <Header />
      <div className="flex min-h-0 flex-1">
        <CodePanel />
        <ToolRail />
        <main className="relative flex min-w-0 flex-1 flex-col">
          <ZoomBar />
          <div className="flex flex-1 items-center px-10">
            <MapFrame />
          </div>
          <AdBanner />
        </main>
      </div>
      <div role="status" className="absolute top-[21px] left-1/2 z-20 flex h-[59px] w-[700px] -translate-x-1/2 items-center justify-center rounded-[3px] bg-[#1dbb69] text-sm font-semibold text-white opacity-[0.18] shadow-[0_1px_4px_rgba(0,0,0,0.4)]">
        Copied to clipboard!
        <button type="button" aria-label="Dismiss" className="absolute right-[30px]"><CloseIcon className="size-[9px]" /></button>
      </div>
    </div>
  );
}
